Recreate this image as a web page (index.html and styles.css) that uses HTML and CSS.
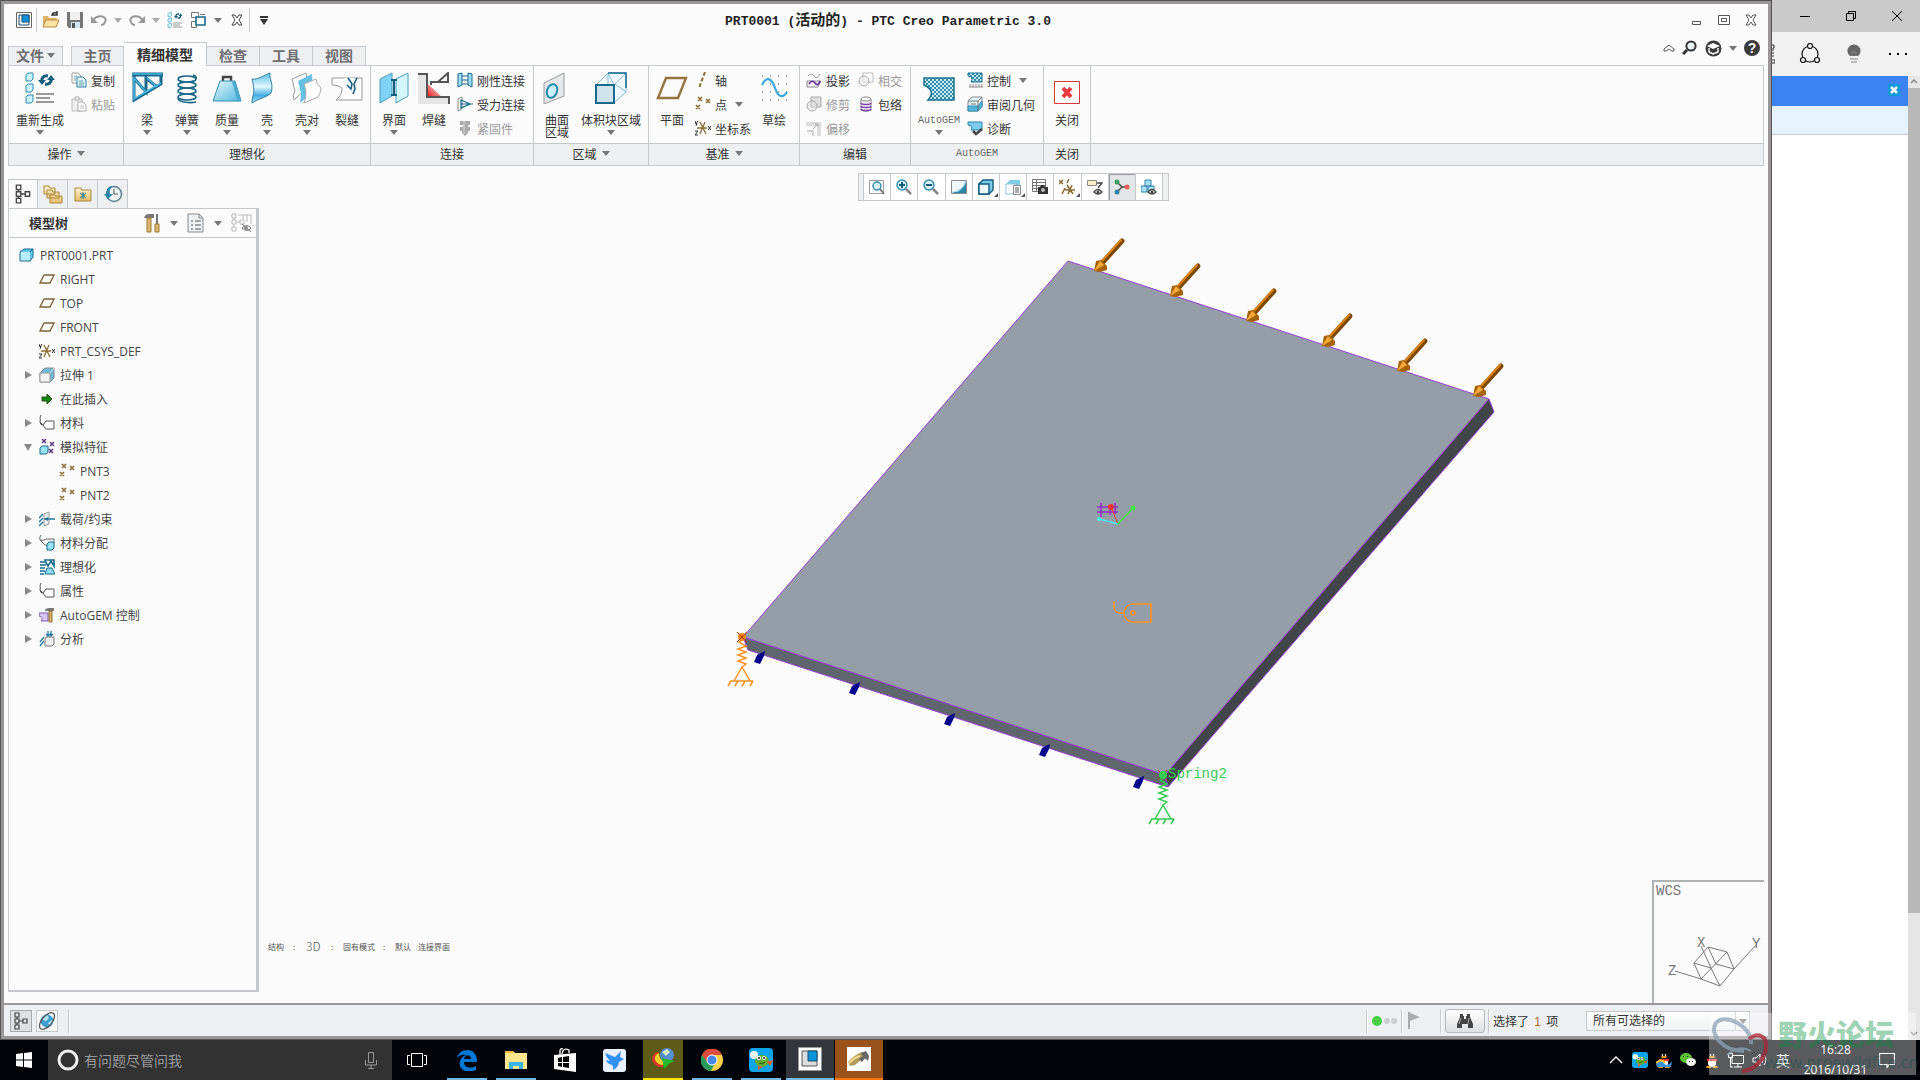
FILE: index.html
```
<!DOCTYPE html>
<html lang="zh-CN">
<head>
    <meta charset="UTF-8">
    <meta name="viewport" content="width=device-width, initial-scale=1.0">
    <title>PRT0001 (活动的) - PTC Creo Parametric 3.0</title>
    <link rel="stylesheet" href="styles.css">
</head>
<body>
    <!-- shared icons -->
    <svg class="defs" width="0" height="0" aria-hidden="true">
        <defs>
            <linearGradient id="blue" x1="0" y1="0" x2="1" y2="1"><stop offset="0" stop-color="#e4f7fd"/><stop offset="1" stop-color="#52b8e0"/></linearGradient>
            <linearGradient id="shell" x1="0" y1="0" x2="0" y2="1"><stop offset="0" stop-color="#56bfea"/><stop offset=".45" stop-color="#e2f7ff"/><stop offset=".75" stop-color="#3faee2"/><stop offset="1" stop-color="#b4e8fb"/></linearGradient>
            <linearGradient id="red" x1="0" y1="1" x2="1" y2="0"><stop offset="0" stop-color="#e81818"/><stop offset="1" stop-color="#fff"/></linearGradient>
            <linearGradient id="gold" x1="0" y1="0" x2="0" y2="1"><stop offset="0" stop-color="#fff3cf"/><stop offset="1" stop-color="#e9bc6a"/></linearGradient>
            <pattern id="mesh" width="4" height="4" patternUnits="userSpaceOnUse"><path d="M0 0L4 4M4 0L0 4" stroke="#17708f" stroke-width=".8"/></pattern>
            <symbol id="i-x3" viewBox="0 0 16 16"><path d="M3 1l4 4M7 1l-4 4M11 3l4 4M15 3l-4 4M1 9l4 4M5 9l-4 4" stroke="#8a6d2f" stroke-width="1.6" fill="none"/></symbol>
            <symbol id="i-plane" viewBox="0 0 16 16"><path d="M5 4h10l-4 8H1z" fill="none" stroke="#7d6435" stroke-width="1.3"/></symbol>
            <symbol id="i-csys" viewBox="0 0 16 16"><path d="M2 8h10M5 2l6 12M10 2L5 14" stroke="#8a6d2f" stroke-width="1.3"/><path d="M0 1l1 3 2-3M2 3L1 6M0 11h3l-3 4h3M13 6l3 4M16 6l-3 4" stroke="#333" fill="none"/></symbol>
            <symbol id="i-cube" viewBox="0 0 16 16"><path d="M1 5l4-3h9v8l-3 4H1z" fill="#62c4ec"/><path d="M1 5h10v9H1z" fill="#b5effd"/><path d="M1 5l4-3h9v8l-3 4H1zM11 5l3-3" fill="none" stroke="#176a8c"/></symbol>
            <symbol id="i-tag" viewBox="0 0 16 16"><path d="M2 0C0 3 2 4 1 7l3 3M1 7q0 3 3 3l3-4h8v8H7l-3-4" fill="none" stroke="#555"/></symbol>
            <symbol id="i-tree" viewBox="0 0 16 18"><path d="M2 1h4v4H2zM2 7h4v4H2zM2 13h4v4H2zM10 7h4v4h-4zM4 5v2M4 11v2M6 9h4" fill="none" stroke="#444" stroke-width="1.2"/></symbol>
            <symbol id="i-regen" viewBox="0 0 32 32"><path d="M2 3l2-2h5v6l-2 2H2zM2 14l2-2h5v6l-2 2H2zM2 25l2-2h5v6l-2 2H2z" fill="#caf2fc" stroke="#2a8db5"/><path d="M12 22h18M12 26h14M12 30h18" stroke="#999" stroke-width="2"/><path d="M18 10c-1-4 2-7 6-6M27 6c1 4-2 7-6 6" fill="none" stroke="#175f80" stroke-width="3"/><path d="M14 8h8l-4 5zM23 8h8l-4-5z" fill="#175f80"/></symbol>
            <symbol id="i-penguin" viewBox="0 0 16 16"><ellipse cx="8" cy="8" rx="5" ry="7" fill="#191919"/><ellipse cx="8" cy="11" rx="4" ry="4" fill="#fff"/><path d="M3 7h10v2H3z" fill="#e33"/><ellipse cx="8" cy="5" rx="3" ry="1" fill="#f8a51b"/><path d="M6 2h1v2H6zM9 2h1v2H9z" fill="#fff"/><path d="M3 14h4v2H2zM9 14h4l1 2H9z" fill="#f8a51b"/></symbol>
            <symbol id="i-pea" viewBox="0 0 24 24"><rect width="24" height="24" rx="4" fill="#0aa5ec"/><ellipse cx="13" cy="13" rx="7" ry="6" fill="#62ad30"/><circle cx="5" cy="7" r="4" fill="#eef7fb"/><circle cx="10" cy="10" r="2" fill="#fff"/><circle cx="15" cy="10" r="2" fill="#fff"/><circle cx="10" cy="10" r="1" fill="#222"/><circle cx="15" cy="10" r="1" fill="#222"/><path d="M10 15q4 2 6-1" stroke="#234d12" fill="none"/><path d="M18 14l6-2-3 6zM9 18l5 1-5 3z" fill="#e5592a"/></symbol>
        </defs>
    </svg>

    <div class="desktop">
        <main class="creo">
            <div class="creo-body">
                <header class="titlebar">
                    <div class="quick">
                        <button class="qbtn" aria-label="窗口"><svg width="16" height="16" viewBox="0 0 16 16"><path d="M.5.5h15v15H.5z" fill="#fff" stroke="#666"/><path d="M3 3h10v10H3z" fill="#eee" stroke="#1c4f70"/><path d="M6 3h7v7H6z" fill="#0a94db" stroke="#1c4f70"/></svg></button>
                        <i class="vsep"></i>
                        <button class="qbtn" aria-label="打开"><svg width="18" height="18" viewBox="0 0 18 18"><path d="M1 16V5h5l1 2h8v9z" fill="#d9b36a"/><path d="M1 16L4 9h13l-3 7z" fill="#fbe3a8" stroke="#b98d3c"/><path d="M10 5c0-4 4-4 5-2M15 0v4h-4" fill="none" stroke="#333" stroke-width="1.5"/></svg></button>
                        <button class="qbtn" aria-label="保存"><svg width="16" height="16" viewBox="0 0 16 16"><path d="M0 0h16v16H2l-2-2z" fill="#777"/><path d="M3 0h10v8H3z" fill="#f0f0f0"/><path d="M4 10h9v6H4z" fill="#cfe6ef"/><path d="M5 11h3v5H5z" fill="#555"/></svg></button>
                        <button class="qbtn" aria-label="撤消"><svg width="16" height="14" viewBox="0 0 16 14"><path d="M2 7c6-7 15-3 12 2q-1 3-4 3" fill="none" stroke="#999" stroke-width="2"/><path d="M0 3v7h7z" fill="#999"/></svg></button>
                        <button class="qcaret" aria-label="撤消列表"><i class="caret light"></i></button>
                        <button class="qbtn" aria-label="重做"><svg width="16" height="14" viewBox="0 0 16 14"><path d="M14 7C8 0-1 4 2 9q1 3 4 3" fill="none" stroke="#999" stroke-width="2"/><path d="M16 3v7H9z" fill="#999"/></svg></button>
                        <button class="qcaret" aria-label="重做列表"><i class="caret light"></i></button>
                        <button class="qbtn" aria-label="重新生成"><svg width="16" height="16"><use href="#i-regen"/></svg></button>
                        <button class="qbtn" aria-label="窗口列表"><svg width="16" height="16" viewBox="0 0 16 16"><path d="M.5.5h7v5h-7zM.5 9.500h5v6h-5zM9 2.500h5" fill="#fff" stroke="#777"/><path d="M5 5h9v8H5z" fill="#fff" stroke="#176a8c" stroke-width="1.600"/></svg></button>
                        <button class="qcaret" aria-label="更多窗口"><i class="caret"></i></button>
                        <button class="qbtn" aria-label="关闭窗口"><svg width="12" height="12" viewBox="0 0 12 12"><path d="M1 1h3l2 3 2-3h3L8 6l3 5H8L6 8l-2 3H1l3-5z" fill="#fff" stroke="#444"/></svg></button>
                        <i class="vsep"></i>
                        <button class="qbtn" aria-label="自定义"><svg width="8" height="9" viewBox="0 0 8 9"><path d="M0 0h8v2H0zM0 3h8L4 9z" fill="#333"/></svg></button>
                    </div>
                    <h1>PRT0001 (<span>活动的</span>) - PTC Creo Parametric 3.0</h1>
                    <div class="winbtns">
                        <button aria-label="最小化"><svg width="12" height="12" viewBox="0 0 12 12"><path d="M1.500 7.500h8v3h-8z" fill="none" stroke="#555"/></svg></button>
                        <button aria-label="最大化"><svg width="12" height="12" viewBox="0 0 12 12"><path d="M.5 1.500h11v9H.5zM3.500 4.500h5v3h-5z" fill="none" stroke="#555"/></svg></button>
                        <button aria-label="关闭"><svg width="12" height="12" viewBox="0 0 12 12"><path d="M1 1h3l2 3 2-3h3L8 6l3 5H8L6 8l-2 3H1l3-5z" fill="#fff" stroke="#555"/></svg></button>
                    </div>
                </header>

                <div class="tabrow">
                    <button class="tab file">文件<i class="caret"></i></button>
                    <nav class="tabs">
                        <button class="tab">主页</button>
                        <button class="tab active">精细模型</button>
                        <button class="tab">检查</button>
                        <button class="tab">工具</button>
                        <button class="tab">视图</button>
                    </nav>
                    <div class="helpbar">
                        <button aria-label="折叠功能区"><svg width="12" height="8" viewBox="0 0 12 8"><path d="M1 5l5-4 5 4v2H9L6 5 3 7H1z" fill="#fff" stroke="#555"/></svg></button>
                        <button aria-label="搜索"><svg width="16" height="16" viewBox="0 0 16 16"><circle cx="9" cy="6" r="4.600" fill="#eef8fb" stroke="#333" stroke-width="2"/><path d="M5 10l-4 4" stroke="#333" stroke-width="3"/></svg></button>
                        <button aria-label="学习"><svg width="17" height="17" viewBox="0 0 17 17"><circle cx="8.500" cy="8.500" r="8" fill="#3b3b3b"/><path d="M2 6l6-3 7 3-7 3z" fill="#fff"/><path d="M4 8v4l4 2 5-2V8" fill="none" stroke="#fff" stroke-width="1.400"/></svg></button>
                        <i class="caret"></i>
                        <button aria-label="帮助" class="q">?</button>
                    </div>
                </div>

                <section class="ribbon">
                    <div class="group">
                        <div class="tools">
                            <button class="big regen"><svg width="32" height="32"><use href="#i-regen"/></svg>重新生成<i class="caret"></i></button>
                            <div class="small-col">
                                <button class="small"><svg width="16" height="16" viewBox="0 0 16 16"><path d="M1 1h6l3 3v7H1z" fill="#fff" stroke="#999"/><path d="M6 5h6l3 3v7H6z" fill="#e3f5fb" stroke="#2b7ba0"/><path d="M8 9h4M8 11h5M8 13h5M3 4h3M3 6h2M3 8h2" stroke="#5aa"/></svg>复制</button>
                                <button class="small" disabled><svg width="16" height="16" viewBox="0 0 16 16"><path d="M1 3h10v12H1z" fill="#eee" stroke="#bbb"/><path d="M4 1h4v3H4zM7 6h5l3 3v6H7z" fill="#fff" stroke="#aaa"/><path d="M9 10h4M9 12h4" stroke="#bbb"/></svg>粘贴</button>
                            </div>
                        </div>
                        <h2>操作<i class="caret"></i></h2>
                    </div>
                    <div class="group">
                        <div class="tools">
                            <button class="big"><svg width="32" height="32" viewBox="0 0 32 32"><path d="M1 2.500h31" stroke="#176a8c" stroke-width="4"/><path d="M3 3v25L30 12V4M3 6l12 14V6l11 9" fill="none" stroke="#176a8c" stroke-width="3"/><path d="M1 2h30M3 5v22L30 11M4 7l11 13M16 6l10 9" fill="none" stroke="#4ab6e2" stroke-width="1.500"/></svg>梁<i class="caret"></i></button>
                            <button class="big"><svg width="32" height="32" viewBox="0 0 32 32"><g fill="none" stroke="#1b6787" stroke-width="1.600"><ellipse cx="16" cy="7" rx="9" ry="3"/><ellipse cx="16" cy="13" rx="9" ry="3"/><ellipse cx="16" cy="19" rx="9" ry="3"/><ellipse cx="16" cy="25" rx="9" ry="3"/><path d="M22 3q4 1 3 4M7 26c0 5 14 5 18 4"/></g></svg>弹簧<i class="caret"></i></button>
                            <button class="big"><svg width="32" height="32" viewBox="0 0 32 32"><path d="M12 9V5h8v4" fill="none" stroke="#444" stroke-width="2.500"/><path d="M9 9h15l6 20H2z" fill="url(#blue)" stroke="#338eac"/><path d="M24 9l6 19-3 2-6-20z" fill="#4ba9cc"/></svg>质量<i class="caret"></i></button>
                            <button class="big"><svg width="32" height="32" viewBox="0 0 32 32"><path d="M1 7C7 8 13 3 19 1c-1 7 4 10 1 20-5 5-12 5-19 10 0-9 4-9 0-24z" fill="url(#shell)" stroke="#3782a0"/></svg>壳<i class="caret"></i></button>
                            <button class="big"><svg width="32" height="32" viewBox="0 0 32 32"><path d="M1 7l14-6 1 8 3 4-16 15q-2-5 1-9z" fill="#fff" stroke="#999"/><path d="M7 9l14-7 1 18-13 11q1-6 1-10z" fill="#63bfe3"/><path d="M13 12l12-5q0 5 5 9-1 7-3 9l-14 6q4-10 0-19z" fill="#fff" stroke="#aaa"/></svg>壳对<i class="caret"></i></button>
                            <button class="big"><svg width="32" height="32" viewBox="0 0 32 32"><path d="M1 6h30v22H5q7-6 6-12-3-3-10-3z" fill="#fff" stroke="#999"/><path d="M13 6h11l-4 3 2 6-1 5-5-7z" fill="#eefaff"/><path d="M17 6l4 6-1 5-4-4M26 6l-3 6 1 5-2 5" fill="none" stroke="#1c5f80" stroke-width="1.600"/></svg>裂缝</button>
                        </div>
                        <h2>理想化</h2>
                    </div>
                    <div class="group">
                        <div class="tools">
                            <button class="big"><svg width="32" height="32" viewBox="0 0 32 32"><path d="M2 7l12-6v23L2 31z" fill="#7fd3f8" stroke="#499bbb"/><path d="M18 7l12-6v23l-12 7z" fill="#d4f7ff" stroke="#499bbb"/><path d="M16 8v15M13 8h6M13 23h6" stroke="#176080" stroke-width="2"/></svg>界面<i class="caret"></i></button>
                            <button class="big"><svg width="32" height="32" viewBox="0 0 32 32"><path d="M0 2h9v23h23v7H0z" fill="#e4e4e4"/><path d="M10 12l14 13H10z" fill="url(#red)"/><path d="M0 2h9v23h22v7M13 13v-3h7L30 1v9H20" fill="none" stroke="#555" stroke-width="2"/></svg>焊缝</button>
                            <div class="small-col">
                                <button class="small"><svg width="16" height="16" viewBox="0 0 16 16"><path d="M1 2l4-1v12l-4 2zM11 1l4 1v13l-4-2z" fill="#9edcf5" stroke="#176a8c"/><path d="M5 4h6M5 8h6M5 12h6" stroke="#176a8c"/></svg>刚性连接</button>
                                <button class="small"><svg width="16" height="16" viewBox="0 0 16 16"><path d="M1 3l4-2v12l-4 2z" fill="#fff" stroke="#888"/><path d="M4 4l9 4-9 4zM4 8h12" fill="none" stroke="#176a8c" stroke-width="1.200"/></svg>受力连接</button>
                                <button class="small" disabled><svg width="16" height="16" viewBox="0 0 16 16"><path d="M3 1h10v4h-2v2h2v4h-2v2l-3 3-3-3v-2H3V7h3V5H3z" fill="#aaa"/><path d="M7 1v13" stroke="#ddd"/></svg>紧固件</button>
                            </div>
                        </div>
                        <h2>连接</h2>
                    </div>
                    <div class="group">
                        <div class="tools">
                            <button class="big"><svg width="32" height="32" viewBox="0 0 32 32"><path d="M3 11l20-10v23L3 32z" fill="#e6e8ea" stroke="#999"/><ellipse cx="11" cy="19" rx="5" ry="7" fill="#c9f2fc" stroke="#2589aa" stroke-width="2" transform="rotate(20 11 19)"/></svg>曲面<br>区域</button>
                            <button class="big wide"><svg width="32" height="32" viewBox="0 0 32 32"><path d="M1 13L13 1h18v19L19 31H1z" fill="#eefaff" stroke="#83b6c7"/><path d="M13 1l6 12M31 20L20 12 31 1M13 1v12" stroke="#8abdcf" fill="none"/><path d="M1 13h18v18H1z" fill="#cfe3ea" stroke="#176a8c" stroke-width="2"/><path d="M13 1h18v15" fill="none" stroke="#176a8c" stroke-width="1.500"/></svg>体积块区域<i class="caret"></i></button>
                        </div>
                        <h2>区域<i class="caret"></i></h2>
                    </div>
                    <div class="group">
                        <div class="tools">
                            <button class="big"><svg width="32" height="32" viewBox="0 0 32 32"><path d="M10 6h20l-8 20H2z" fill="none" stroke="#94743c" stroke-width="2.400"/></svg>平面</button>
                            <div class="small-col datum">
                                <button class="small"><svg width="16" height="16" viewBox="0 0 16 16"><path d="M10 0L4 16" stroke="#8a6d2f" stroke-width="2" stroke-dasharray="4 2"/></svg>轴</button>
                                <button class="small"><svg width="16" height="16"><use href="#i-x3"/></svg>点<i class="caret"></i></button>
                                <button class="small"><svg width="16" height="16"><use href="#i-csys"/></svg>坐标系</button>
                            </div>
                            <button class="big"><svg width="32" height="32" viewBox="0 0 32 32"><path d="M4 4h25M4 12h25M4 20h25M4 28h25" stroke="#444" stroke-dasharray="1 7"/><path d="M4 13c5-10 10-6 13 3s8 11 12 4" fill="none" stroke="#3ba8e0" stroke-width="2.200"/></svg>草绘</button>
                        </div>
                        <h2>基准<i class="caret"></i></h2>
                    </div>
                    <div class="group">
                        <div class="tools edit">
                            <div class="small-col">
                                <button class="small"><svg width="16" height="16" viewBox="0 0 16 16"><path d="M2 4q3-4 6 0t6-2" fill="none" stroke="#999"/><path d="M1 9h14l-3 6H1z" fill="#f3eefa" stroke="#888"/><path d="M3 12q3-5 6-1t5-2" fill="none" stroke="#6b2fa0" stroke-width="1.600"/></svg>投影</button>
                                <button class="small" disabled><svg width="16" height="16" viewBox="0 0 16 16"><path d="M5 1h10v10H5z" fill="#ddd" stroke="#aaa"/><circle cx="6" cy="10" r="5" fill="#ddd8" stroke="#aaa"/></svg>修剪</button>
                                <button class="small" disabled><svg width="16" height="16" viewBox="0 0 16 16"><path d="M0 2h15v14h-4V6H0z" fill="#ddd"/><path d="M1 11h6v5M7 9l5-5M9 4h3v3" fill="none" stroke="#aaa"/></svg>偏移</button>
                            </div>
                            <div class="small-col">
                                <button class="small" disabled><svg width="16" height="16" viewBox="0 0 16 16"><path d="M5 1h10v9H5z" fill="#fff" stroke="#bbb"/><circle cx="6" cy="9" r="5" fill="#eee8" stroke="#aaa"/></svg>相交</button>
                                <button class="small"><svg width="16" height="16" viewBox="0 0 16 16"><path d="M3 3v10c0 3 10 3 10 0V3" fill="#eee" stroke="#888"/><ellipse cx="8" cy="3" rx="5" ry="2" fill="#fff" stroke="#888"/><path d="M3 7c0 2 10 2 10 0M3 10c0 2 10 2 10 0M3 13c0 2 10 2 10 0" fill="none" stroke="#7d3fb0" stroke-width="1.400"/></svg>包络</button>
                            </div>
                        </div>
                        <h2>编辑</h2>
                    </div>
                    <div class="group">
                        <div class="tools">
                            <button class="big gem"><svg width="32" height="32" viewBox="0 0 32 32"><path d="M1 6h30v22H5c5-5 5-11-4-15z" fill="#c3edfa"/><path d="M1 6h30v22H5c5-5 5-11-4-15z" fill="url(#mesh)" stroke="#17708f" stroke-width="1.500"/></svg><span class="mono">AutoGEM</span><i class="caret"></i></button>
                            <div class="small-col">
                                <button class="small"><svg width="16" height="16" viewBox="0 0 16 16"><path d="M1 1h14v9H4q3-5-3-6z" fill="#b6e8f8"/><path d="M1 1h14v9H4q3-5-3-6z" fill="url(#mesh)" stroke="#17708f"/><path d="M3 15v-3M6 15v-3M9 15v-3M12 15v-3M15 15v-3M2 15h14" stroke="#888"/></svg>控制<i class="caret"></i></button>
                                <button class="small"><svg width="16" height="16" viewBox="0 0 16 16"><path d="M1 5l4-4h10v10l-4 4H1z" fill="#e2f4fa" stroke="#888"/><path d="M1 10h10v5H1zM11 10l4-5v6l-4 4z" fill="#52b5dc" stroke="#388daf"/><path d="M1 5h10v9M11 5l4-4M4 8h5" stroke="#777" fill="none"/></svg>审阅几何</button>
                                <button class="small"><svg width="16" height="16" viewBox="0 0 16 16"><path d="M1 2h14v8H4q3-4-3-5z" fill="#7acbef" stroke="#2b86ac"/><path d="M6 11l3 3 6-5" fill="none" stroke="#444" stroke-width="2.500"/></svg>诊断</button>
                            </div>
                        </div>
                        <h2 class="mono">AutoGEM</h2>
                    </div>
                    <div class="group">
                        <div class="tools">
                            <button class="big"><svg width="32" height="32" viewBox="0 0 32 32"><path d="M3.500 9.500h25v22h-25z" fill="#fff" stroke="#d8393b"/><path d="M12 16l8 9M20 16l-8 9" stroke="#e83a3c" stroke-width="4"/></svg>关闭</button>
                        </div>
                        <h2>关闭</h2>
                    </div>
                    <div class="group last"><div class="tools"></div><h2></h2></div>
                </section>

                <div class="work">
                    <aside class="panel">
                        <div class="ptabs">
                            <button class="on" aria-label="模型树"><svg width="18" height="20"><use href="#i-tree"/></svg></button>
                            <button aria-label="文件夹"><svg width="20" height="20" viewBox="0 0 20 20"><path d="M1 2h5l1 2h5v6H1zM4 6h5l1 2h6v6H4zM7 11h5l1 1h6v7H7z" fill="url(#gold)" stroke="#a8873f"/></svg></button>
                            <button aria-label="收藏夹"><svg width="18" height="18" viewBox="0 0 18 18"><path d="M1 3h6l1 2h9v11H1z" fill="url(#gold)" stroke="#a8873f"/><path d="M9 7v7M6 8l6 5M12 8l-6 5" stroke="#176a8c"/></svg></button>
                            <button aria-label="历史"><svg width="20" height="20" viewBox="0 0 20 20"><circle cx="11" cy="10" r="7.500" fill="#eef4f6" stroke="#5c7f8e" stroke-width="1.500"/><path d="M11 5v5h4" fill="none" stroke="#555"/><path d="M10 2C4 2 3 7 4 10H1l4 5 5-5H7c-1-4 1-6 3-8z" fill="#2a86aa"/></svg></button>
                        </div>
                        <div class="pbox">
                            <div class="phead">
                                <h3>模型树</h3>
                                <button aria-label="设置"><svg width="18" height="20" viewBox="0 0 18 20"><path d="M1 5q1-4 5-4h5v4H5z" fill="#777"/><path d="M4 5h4v14H4z" fill="#ddb36a" stroke="#9c7838"/><path d="M14 1v10" stroke="#777" stroke-width="2"/><path d="M12 11h4v8h-4z" fill="#ddb36a" stroke="#9c7838"/></svg></button>
                                <i class="caret"></i>
                                <button aria-label="显示"><svg width="18" height="20" viewBox="0 0 18 20"><path d="M1 1h11l4 4v14H1z" fill="#eef2f5" stroke="#888"/><path d="M12 1v4h4" fill="none" stroke="#888"/><path d="M4 8h2M8 8h6M4 12h2M8 12h6M4 16h2M8 16h6" stroke="#555"/></svg></button>
                                <i class="caret"></i>
                                <button aria-label="树过滤器" disabled><svg width="22" height="20" viewBox="0 0 22 20"><path d="M1 1h4v4H1zM1 7h4v4H1zM1 14h4v4H1zM9 7h4v4H9zM3 5v2M3 11v3M5 9h4M7 2h13v9M12 2v4M16 2v7" fill="none" stroke="#bbb"/><path d="M11 15q5-5 9 0-4 5-9 0zM11 11l9 8" fill="none" stroke="#777"/><circle cx="15" cy="15" r="2" fill="#888"/></svg></button>
                            </div>
                            <ul class="tree">
                                <li class="root"><svg><use href="#i-cube"/></svg>PRT0001.PRT</li>
                                <li><svg><use href="#i-plane"/></svg>RIGHT</li>
                                <li><svg><use href="#i-plane"/></svg>TOP</li>
                                <li><svg><use href="#i-plane"/></svg>FRONT</li>
                                <li><svg><use href="#i-csys"/></svg>PRT_CSYS_DEF</li>
                                <li class="closed"><svg viewBox="0 0 16 16"><path d="M1 6l5-5h9v10l-4 4H1z" fill="#6cb9da" stroke="#888"/><path d="M1 6h10v9H1z" fill="#f2f2f2" stroke="#999"/><path d="M11 6l4-5" stroke="#ddd"/></svg>拉伸 1</li>
                                <li><svg viewBox="0 0 16 16"><path d="M3 6h5V3l5 5-5 5v-3H3z" fill="#0b8a0b" stroke="#2a4a12"/></svg>在此插入</li>
                                <li class="closed"><svg><use href="#i-tag"/></svg>材料</li>
                                <li class="open"><svg viewBox="0 0 16 16"><path d="M1 9l2-2h6v6l-2 2H1z" fill="#9be2f6" stroke="#176a8c"/><path d="M3 0l4 4M7 0L3 4M11 3l4 4M15 3l-4 4M10 10l4 4M14 10l-4 4" stroke="#5e3a8a" stroke-width="1.500"/></svg>模拟特征</li>
                                <li class="sub"><svg><use href="#i-x3"/></svg>PNT3</li>
                                <li class="sub"><svg><use href="#i-x3"/></svg>PNT2</li>
                                <li class="closed"><svg viewBox="0 0 16 16"><path d="M5 3l5-2v12l-5 2z" fill="#eee" stroke="#999"/><path d="M4 3L0 7M4 7l-4 4M4 11l-4 4M5 8h11" stroke="#1f79a0" stroke-width="1.400"/><path d="M6 8l3-2v4z" fill="#176a8c"/></svg>载荷/约束</li>
                                <li class="closed"><svg viewBox="0 0 16 16"><path d="M2 0C0 3 1 4 1 5l4 4M1 5q4 1 6-1h8v4M5 9l3 2" fill="none" stroke="#666"/><path d="M8 9l2-2h5v6l-2 2H8z" fill="#9be2f6" stroke="#176a8c"/></svg>材料分配</li>
                                <li class="closed"><svg viewBox="0 0 16 16"><path d="M1 3h6M1 6h6M1 9h5M1 12h5M1 15h4M5 1h10v6l-3-5-3 5-3-5" fill="none" stroke="#176a8c" stroke-width="1.600"/><path d="M8 9h5l3 6H6z" fill="#8fdcf5" stroke="#176a8c"/></svg>理想化</li>
                                <li class="closed"><svg><use href="#i-tag"/></svg>属性</li>
                                <li class="closed"><svg viewBox="0 0 16 16"><path d="M0 6h9v8H2q3-4-2-5z" fill="#d6c6f3" stroke="#7b5fb0"/><path d="M6 3q1-2 4-2h5v3H6z" fill="#777"/><path d="M10 4h3v11h-3z" fill="#ddb36a" stroke="#8c6d35"/></svg>AutoGEM 控制</li>
                                <li class="closed"><svg viewBox="0 0 16 16"><path d="M6 8l1-2h8v7l-2 2H6z" fill="#eee" stroke="#777"/><path d="M5 6l-4 5M5 10l-4 5M9 0v5M12 0v5M7 3l2 2 2-2 1 2 2-2" fill="none" stroke="#1f79a0" stroke-width="1.300"/></svg>分析</li>
                            </ul>
                        </div>
                    </aside>

                    <section class="view">
                        <div class="viewbar">
                            <i class="grip"></i>
                            <button aria-label="重新调整"><svg viewBox="0 0 16 16"><path d="M.5 1.500h14v13H.5z" fill="#fff" stroke="#999"/><circle cx="8" cy="7" r="4" fill="#d9f2fa" stroke="#2d89ab" stroke-width="1.400"/><path d="M11 10l4 5" stroke="#777" stroke-width="2"/></svg></button>
                            <button aria-label="放大"><svg viewBox="0 0 16 16"><circle cx="6" cy="6" r="5" fill="#d9f2fa" stroke="#2d89ab" stroke-width="1.400"/><path d="M3 6h6M6 3v6" stroke="#125a7c" stroke-width="2"/><path d="M10 10l5 5" stroke="#888" stroke-width="2.500"/></svg></button>
                            <button aria-label="缩小"><svg viewBox="0 0 16 16"><circle cx="6" cy="6" r="5" fill="#d9f2fa" stroke="#2d89ab" stroke-width="1.400"/><path d="M3 6h6" stroke="#125a7c" stroke-width="2"/><path d="M10 10l5 5" stroke="#888" stroke-width="2.500"/></svg></button>
                            <button aria-label="重画"><svg viewBox="0 0 16 16"><path d="M.5 1.500h15v13H.5z" fill="url(#blue)" stroke="#888"/><path d="M1 2h13q-1 9-13 11z" fill="#eef8fb"/><path d="M3 13h4q5-3 8-9v10H3z" fill="#2585aa"/></svg></button>
                            <button class="more" aria-label="显示样式"><svg viewBox="0 0 16 16"><path d="M1 5l4-4h10v10l-4 4H1z" fill="#7ccde9" stroke="#125a7c" stroke-width="1.400"/><path d="M1 5h10v10H1z" fill="#eafaff" stroke="#125a7c" stroke-width="1.400"/></svg></button>
                            <button class="more" aria-label="已保存方向"><svg viewBox="0 0 16 16"><path d="M1 5l4-4h10v10H1z" fill="#7ccde9"/><path d="M1 5h10v10H1z" fill="#fff" stroke="#8fc4d8"/><path d="M8.500 6.500h7v9h-7z" fill="#fff" stroke="#888"/><path d="M10 9h4M10 11h4M10 13h4" stroke="#555"/></svg></button>
                            <button aria-label="视图管理器"><svg viewBox="0 0 16 16"><path d="M.5.5h13v12H.5zM.5 3.500h13M.5 6.500h13M.5 9.500h13M4.500.5v12" fill="#fff" stroke="#777"/><path d="M6 8h2l1-2h3l1 2h3v7H6z" fill="#333"/><circle cx="11" cy="11" r="2" fill="#bbb"/></svg></button>
                            <button class="more" aria-label="基准显示"><svg viewBox="0 0 16 16"><path d="M0 1l4 4M4 1L0 5M10 0L8 4M6 9l-3 6M6 11h10M8 6l6 9M13 6l-4 9" stroke="#8a6d2f" stroke-width="1.500"/></svg></button>
                            <button aria-label="注释显示"><svg viewBox="0 0 16 16"><path d="M.5 1.500h9v5h-9z" fill="#fff2c8" stroke="#888"/><path d="M10 4h5l-4 5M7 13q4-5 8 0-4 4-8 0z" fill="none" stroke="#444" stroke-width="1.300"/><circle cx="11" cy="13" r="1.500" fill="#444"/></svg></button>
                            <button class="pressed" aria-label="旋转中心"><svg viewBox="0 0 16 16"><path d="M3 3l5 5-5 5M8 8h5" fill="none" stroke="#444" stroke-width="1.400"/><circle cx="3" cy="3" r="2.500" fill="#3c9c5c"/><circle cx="3" cy="13" r="2.500" fill="#2d82a8"/><circle cx="13" cy="8" r="2.500" fill="#e8605c"/></svg></button>
                            <button aria-label="模拟显示"><svg viewBox="0 0 16 16"><path d="M4 1h6v6H4zM0 7h6v6H0zM7 7h6v5H7z" fill="#a8e1f3" stroke="#2d82a8"/><path d="M7 13q4-5 8 0-4 4-8 0z" fill="#fff" stroke="#444" stroke-width="1.300"/><circle cx="11" cy="13" r="1.500" fill="#444"/></svg></button>
                            <i class="grip"></i>
                        </div>

                        <!-- model scene -->
                        <svg class="scene" viewBox="259 201 1509 802" preserveAspectRatio="xMaxYMax meet">
                            <defs>
                                <g id="load">
                                    <path d="M8 -8L27 -29" stroke="#7c4703" stroke-width="5" stroke-linecap="round"/>
                                    <path d="M7 -9L26 -30" stroke="#d9820f" stroke-width="2" stroke-linecap="round"/>
                                    <path d="M-1 1L1 -9 6 -10 12 -4 12 0 5 2z" fill="#a86208"/>
                                    <path d="M-1 1L5 -9 9 -5z" fill="#f7ab3c"/>
                                </g>
                                <path id="pin" d="M0 0L-8 4-11 11-5 13-1 5z" fill="#00008c"/>
                                <g id="spring" fill="none" stroke-width="1.500">
                                    <path d="M0 3l-3 2 7 4-8 3 8 3-8 3 8 3-8 3 8 3-4 3M0 30l-8 14H8zM-12 44h23M-11 44l-3 5M-4 44l-3 5M3 44l-3 5M11 44l-3 5"/>
                                </g>
                            </defs>
                            <path d="M1068 261L1489 399 1165 775 743 637z" fill="#959da8" stroke="#943fd0"/>
                            <path d="M743 637L1165 775 1168 787 748 650z" fill="#5f666d" stroke="#943fd0"/>
                            <path d="M1489 399L1494 412 1168 787 1165 775z" fill="#424549" stroke="#943fd0"/>
                            <use href="#load" x="1095" y="270"/>
                            <use href="#load" x="1171" y="295"/>
                            <use href="#load" x="1247" y="320"/>
                            <use href="#load" x="1323" y="345"/>
                            <use href="#load" x="1398" y="370"/>
                            <use href="#load" x="1474" y="395"/>
                            <use href="#pin" x="765" y="651"/>
                            <use href="#pin" x="860" y="682"/>
                            <use href="#pin" x="955" y="713"/>
                            <use href="#pin" x="1050" y="744"/>
                            <use href="#pin" x="1144" y="776"/>
                            <use href="#spring" x="742" y="637" stroke="#ff921e"/>
                            <circle cx="742" cy="637" r="4" fill="#ff8c10"/>
                            <path d="M737 632l10 10M747 632l-10 10" stroke="#a3341c"/>
                            <use href="#spring" x="1163" y="775" stroke="#34cb50"/>
                            <path d="M1158 770l9 10M1167 770l-9 10" stroke="#a3341c"/>
                            <circle cx="1163" cy="775" r="4" fill="#34cb50"/>
                            <text class="spring-label" x="1168" y="778">Spring2</text>
                            <path d="M1097 507h21M1097 512h21M1101 503v14M1110 505v10M1115 503v11" stroke="#902cc0" stroke-width="1.500"/>
                            <path d="M1118 524L1111 507" stroke="#f33"/>
                            <path d="M1118 524L1099 519" stroke="#4ff0f5" stroke-width="1.500"/>
                            <path d="M1118 524L1133 508" stroke="#3ee83e" stroke-width="1.500"/>
                            <circle cx="1111" cy="507" r="3" fill="#f33"/>
                            <circle cx="1099" cy="519" r="2" fill="#4ff0f5"/>
                            <circle cx="1133" cy="508" r="2.500" fill="#3ee83e"/>
                            <path d="M1114 601v5q0 7 6 7h4M1133 604h18v18h-18a9 9 0 0 1 0-18z" fill="none" stroke="#ff921e" stroke-width="1.600"/>
                            <circle cx="1133" cy="613" r="2" fill="none" stroke="#ff921e" stroke-width="1.500"/>
                            <g class="mode">
                                <text x="268" y="950">结构</text><text x="293" y="950">:</text>
                                <text class="dim" x="306" y="951">3D</text><text x="331" y="950">:</text>
                                <text x="343" y="950">固有模式</text><text x="383" y="950">:</text>
                                <text x="395" y="950">默认</text><text x="418" y="950">连接界面</text>
                            </g>
                            <path d="M1653 1003V881h111" fill="none" stroke="#aeb2b2" stroke-width="2"/>
                            <g class="wcs">
                                <text x="1656" y="895">WCS</text>
                                <text x="1697" y="947">X</text><text x="1752" y="948">Y</text><text x="1668" y="975">Z</text>
                            </g>
                            <path d="M1708 947L1727 952 1734 969 1720 986 1701 979 1694 963zM1694 963L1711 968M1716 964L1734 969M1727 952L1701 979M1708 947L1716 964M1711 968L1720 986M1701 946L1711 968M1675 971L1701 979M1757 944L1734 969" fill="none" stroke="#777"/>
                        </svg>
                    </section>
                </div>

                <footer class="status">
                    <button class="sbtn on" aria-label="导航器"><svg width="18" height="18"><use href="#i-tree"/></svg></button>
                    <button class="sbtn" aria-label="浏览器"><svg width="18" height="18" viewBox="0 0 18 18"><circle cx="9" cy="9" r="6.500" fill="#3c9fd0"/><path d="M5 5l4-2 2 3-3 3-3-1zM10 11l4-3 1 3-3 3z" fill="#b6e4f7"/><ellipse cx="9" cy="9" rx="10" ry="5" fill="none" stroke="#555" stroke-width="1.300" transform="rotate(-50 9 9)"/></svg></button>
                    <i class="ssep"></i>
                    <div class="sright">
                        <i class="ssep"></i>
                        <svg width="27" height="12" viewBox="0 0 27 12"><circle cx="6" cy="6" r="5" fill="#44d244"/><circle cx="16" cy="6" r="3" fill="#ccc"/><circle cx="23" cy="6" r="3" fill="#ccc"/></svg>
                        <i class="ssep"></i>
                        <svg class="flag" width="12" height="17" viewBox="0 0 12 17"><path d="M0 0h2v17H0zM2 1l10 4-10 4z" fill="#aaa"/></svg>
                        <i class="ssep"></i>
                        <button class="find" aria-label="查找"><svg width="16" height="16" viewBox="0 0 16 16"><path d="M3 1h3v2h1v3h2V3h1V1h3v3l3 7v4h-5v-4H5v4H0v-4l3-7z" fill="#444"/><path d="M4 5l-2 6M12 5l-1 6" stroke="#aaa"/></svg></button>
                        <i class="ssep"></i>
                        <label for="filter">选择了 <b>1</b> 项</label>
                        <div class="select">
                            <select id="filter"><option>所有可选择的</option></select>
                            <i class="caret"></i>
                        </div>
                    </div>
                </footer>
            </div>
        </main>

        <aside class="edge">
            <div class="edge-title">
                <button aria-label="最小化"><svg width="12" height="12"><path d="M1 6.500h10" stroke="#000"/></svg></button>
                <button aria-label="还原"><svg width="12" height="12"><path d="M1.500 3.500h7v7h-7zM3.500 3V1.500h7v7H9" fill="none" stroke="#000"/></svg></button>
                <button aria-label="关闭"><svg width="12" height="12"><path d="M1 1l10 10M11 1L1 11" stroke="#000"/></svg></button>
            </div>
            <div class="edge-tools">
                <svg class="cut" width="3" height="20"><path d="M0 1h2v3H1v3M0 9h2M0 12h2M0 16h3v3H0" fill="none" stroke="#333"/></svg>
                <button aria-label="共享"><svg width="22" height="22" viewBox="0 0 22 22"><circle cx="11" cy="11" r="8" fill="none" stroke="#111" stroke-width="1.200"/><g fill="#f1f1f1" stroke="#111" stroke-width="1.200"><circle cx="11" cy="3" r="2.500"/><circle cx="4" cy="17" r="2.500"/><circle cx="18" cy="17" r="2.500"/></g></svg></button>
                <button aria-label="提示"><svg width="14" height="20" viewBox="0 0 14 20"><path d="M3 12a6.500 6.500 0 1 1 8 0z" fill="#666"/><path d="M5 12V8h4v4M3 15h8M4 18h6" fill="none" stroke="#888"/></svg></button>
                <button aria-label="更多"><svg width="20" height="4"><path d="M1 1h2v2H1zM9 1h2v2H9zM17 1h2v2h-2z"/></svg></button>
            </div>
            <div class="edge-page">
                <div class="page">
                    <div class="bluebar"><button aria-label="关闭提示"><svg width="12" height="12"><path d="M3 3l6 6M9 3L3 9" stroke="#fff" stroke-width="2.500"/></svg></button></div>
                    <div class="lightbar"></div>
                </div>
                <div class="scroll">
                    <svg width="12" height="12"><path d="M3 7l3-3 3 3" fill="none" stroke="#888" stroke-width="1.500"/></svg>
                    <i class="thumb"></i>
                    <svg width="12" height="12"><path d="M3 4l3 3 3-3" fill="none" stroke="#888" stroke-width="1.500"/></svg>
                </div>
            </div>
        </aside>
    </div>

    <footer class="taskbar">
        <button class="start" aria-label="开始"><svg width="16" height="16" viewBox="0 0 16 16"><path d="M0 2l7-1v6.500H0zM8 1l8-1v7.500H8zM0 8.500h7V15l-7-1zM8 8.500h8V16l-8-1z" fill="#fff"/></svg></button>
        <div class="cortana">
            <svg width="22" height="22"><circle cx="11" cy="11" r="9" fill="none" stroke="#eee" stroke-width="3"/></svg>
            <input type="text" placeholder="有问题尽管问我" aria-label="搜索">
            <svg width="12" height="17" viewBox="0 0 12 17"><path d="M3.500.5h5v10h-5zM.5 8v5h11V8M6 13v3M3 16.500h6" fill="none" stroke="#999"/></svg>
        </div>
        <div class="apps">
            <button class="taskview" aria-label="任务视图"><svg width="20" height="16"><path d="M4.500 1.500h11v13h-11zM3 3.500H.5v9H3M17 3.500h2.500v9H17" fill="none" stroke="#fff"/></svg></button>
            <button class="run" aria-label="Edge"><svg width="22" height="22" viewBox="0 0 22 22"><path d="M1 10C2-1 20-3 21 11v2H8c0 6 7 7 12 4v4C10 25 2 20 4 12c1-3 3-5 6-6-6-1-8 2-9 4zM8 10h7c0-5-6-5-7 0z" fill="#0078d7"/></svg></button>
            <button class="run" aria-label="文件资源管理器"><svg width="22" height="20" viewBox="0 0 22 20"><path d="M0 1h8l2 2h12v16H0z" fill="#ffe58d"/><path d="M0 1h8v2H0z" fill="#f4b63c"/><path d="M4 12h14v7h-4v-3H8v3H4z" fill="#3bb4e8"/></svg></button>
            <button aria-label="应用商店"><svg width="22" height="24" viewBox="0 0 22 24"><path d="M6 7V3q0-3 3-2M8 6q1-7 7-4v3" fill="none" stroke="#fff" stroke-width="1.300"/><path d="M0 7l22-2v19L0 21z" fill="#fff"/><path d="M4 10l4-1v5H4zM9 9l6-1v6H9zM4 15h4v4l-4-1zM9 15h6v5l-6-1z" fill="#000"/></svg></button>
            <button aria-label="迅雷"><svg width="23" height="23" viewBox="0 0 23 23"><rect width="23" height="23" rx="3" fill="#e8f0fc"/><path d="M2 4l10 4 6-6-1 6 4 2-5 3q-1 6-6 8 1-3-1-5-5-1-6-5l4 1q-4-4-5-8z" fill="#3390f3"/></svg></button>
            <button class="idm" aria-label="IDM"><svg width="24" height="24" viewBox="0 0 24 24"><path d="M1 13q0-8 7-8-5 8 9 12-11 8-16-4z" fill="#d43a26"/><path d="M4 13q-1-5 4-7 0 8 9 10-8 5-13-3z" fill="#f0d22c"/><circle cx="16" cy="8" r="7" fill="#558ed0"/><path d="M11 5l5-3 3 3-4 4z" fill="#d8e6c8"/><path d="M11 11l13 3-5 2-6 6z" fill="#28b828"/></svg></button>
            <button class="run" aria-label="Chrome"><svg width="22" height="22" viewBox="0 0 22 22"><circle cx="11" cy="11" r="11" fill="#f9d048"/><path d="M1 6A11 11 0 0 1 21 6H11l-5 8z" fill="#db4b3e"/><path d="M1 6l6 8 6 2-3 6A11 11 0 0 1 1 6z" fill="#279c5a"/><circle cx="11" cy="11" r="5" fill="#4688f0" stroke="#fff"/></svg></button>
            <button class="run" aria-label="游戏"><svg width="24" height="24"><use href="#i-pea"/></svg></button>
            <button class="current" aria-label="Creo"><svg width="24" height="24" viewBox="0 0 24 24"><path d="M.5.5h23v23H.5z" fill="#fff" stroke="#999"/><path d="M4 4h15v15H4z" fill="#ddd" stroke="#555"/><path d="M10 4h9v10h-9z" fill="#0a94db" stroke="#1c4f70"/></svg></button>
            <button class="orange" aria-label="工具"><svg width="24" height="24" viewBox="0 0 24 24"><path d="M0 0h24v24H0z" fill="#fff"/><path d="M1 15q6-7 14-10l6 3-2 4-5 1-6 5-5 1z" fill="#b39a58"/><path d="M14 6l5-2 3 5-1 5-3-3-3 4-3-3 4-3z" fill="#666"/><path d="M2 16q6-6 11-7" fill="none" stroke="#efdb90" stroke-width="2"/></svg></button>
        </div>
        <div class="tray">
            <svg viewBox="0 0 16 16"><path d="M2 11l6-6 6 6" fill="none" stroke="#fff" stroke-width="1.400"/></svg>
            <svg viewBox="0 0 16 16"><use href="#i-pea"/></svg>
            <svg viewBox="0 0 16 16"><use href="#i-penguin"/><path d="M0 12q5-6 8-1t8-2l-1 6H1z" fill="#3a92dd"/><path d="M0 11q6-5 9 0" fill="none" stroke="#f7c32c" stroke-width="2"/></svg>
            <svg viewBox="0 0 16 16"><ellipse cx="6" cy="6" rx="6" ry="5" fill="#58c232"/><ellipse cx="11" cy="10" rx="5" ry="4" fill="#f3f3f3"/><path d="M3 4h1v1H3zM7 4h1v1H7zM9 9h1v1H9zM12 9h1v1h-1z" fill="#222"/></svg>
            <svg viewBox="0 0 16 16"><use href="#i-penguin"/></svg>
            <svg viewBox="0 0 16 16"><path d="M4 3.500h11.500v8H4zM10 12v3M6 15h8M.5 1.500h4v4h-4zM2.500 6v9H5" fill="none" stroke="#fff"/></svg>
            <svg viewBox="0 0 16 16"><path d="M1 6h3l4-4v12l-4-4H1zM10 5q2 3 0 6M12 3q4 5 0 10" fill="none" stroke="#fff"/></svg>
            <span class="ime">英</span>
            <time>16:28<br>2016/10/31</time>
            <svg viewBox="0 0 16 16"><path d="M.5 1.500h15v11H10l-2 3v-3H.5z" fill="none" stroke="#fff" stroke-width="1.200"/></svg>
        </div>
        <div class="watermark">
            <svg width="60" height="60" viewBox="0 0 60 60"><g fill="none" stroke-width="4"><path d="M33 36C10 36-2 18 5 8 14-3 42 12 40 29" stroke="#8da4b8"/><path d="M16 40q12-11 24-4" stroke="#8da4b8" stroke-width="2"/><path d="M38 24c10-8 18-2 17 8-1 12-12 24-24 24" stroke="#a82434"/></g></svg>
            <strong>野火论坛</strong>
            <span>www.proewildfire.cn</span>
        </div>
    </footer>
</body>
</html>
```
FILE: styles.css
```
* {
    box-sizing: border-box;
}

body {
    margin: 0;
    height: 100vh;
    display: flex;
    flex-direction: column;
    overflow: hidden;
    background: #000;
    color: #333;
    font-family: "Liberation Sans", "Noto Sans CJK SC", sans-serif;
    font-size: 12px;
}

button {
    border: 0;
    padding: 0;
    background: none;
    color: inherit;
    font: inherit;
    display: flex;
    align-items: center;
    justify-content: center;
}

h1, h2, h3, ul {
    margin: 0;
    padding: 0;
}

svg {
    flex: none;
}

.defs {
    position: absolute;
}

.caret {
    flex: none;
    border: 4px solid transparent;
    border-top: 5px solid #777;
    border-bottom: 0;
}

.caret.light {
    border-top-color: #aaa;
}

.mono {
    font-family: "Liberation Mono", monospace;
    color: #666;
}

.desktop {
    flex: 1;
    min-height: 0;
    display: flex;
}

/* creo window */
.creo {
    flex: 1;
    min-width: 0;
    display: flex;
    padding: 3px;
    border: 1px solid #555;
    background: #989696;
}

.creo-body {
    flex: 1;
    min-width: 0;
    display: flex;
    flex-direction: column;
    background: #fbfbfc;
}

.titlebar {
    height: 32px;
    display: grid;
    grid-template-columns: 1fr auto 1fr;
    align-items: center;
    padding: 0 4px 0 8px;
}

.titlebar h1 {
    padding-bottom: 3px;
    font: bold 13px "Liberation Mono", "Noto Sans CJK SC", monospace;
    color: #222;
    white-space: pre;
}

.titlebar h1 span {
    font-size: 15px;
}

.quick {
    display: flex;
    align-items: center;
}

.qbtn {
    width: 24px;
    height: 24px;
}

.qcaret {
    width: 14px;
    height: 24px;
}

.vsep {
    width: 1px;
    height: 24px;
    margin-right: 2px;
    background: #c5c9cc;
}

.winbtns {
    display: flex;
    justify-content: flex-end;
}

.winbtns button {
    width: 27px;
    height: 24px;
}

.tabrow {
    height: 29px;
    display: flex;
    align-items: flex-end;
    padding: 0 4px;
}

.tabs {
    display: flex;
    align-items: flex-end;
    flex: 1;
    margin-left: 8px;
}

.tab {
    height: 19px;
    width: 53px;
    padding-bottom: 2px;
    border: 1px solid #c5c9cc;
    border-bottom: 0;
    border-left-width: 0;
    background: #eeeff1;
    color: #6e6e72;
    font-size: 14px;
    font-weight: bold;
}

.tab:first-child {
    border-left-width: 1px;
}

.tab.file {
    width: 55px;
    gap: 3px;
}

.tab.active {
    position: relative;
    width: 83px;
    height: 24px;
    margin-bottom: -1px;
    background: #fbfbfc;
    color: #333;
}

.helpbar {
    display: flex;
    align-items: center;
    gap: 7px;
    height: 34px;
    padding-right: 4px;
}

.helpbar .q {
    width: 16px;
    height: 16px;
    border-radius: 50%;
    background: #3b3b3b;
    color: #fff;
    font-weight: bold;
    font-size: 14px;
}

/* ribbon */
.ribbon {
    display: grid;
    grid-template-columns: 115px 247px 163px 115px 151px 111px 133px 47px 1fr;
    margin: 0 4px;
    border: 1px solid #c5c9cc;
    height: 101px;
}

.group {
    display: flex;
    flex-direction: column;
    border-right: 1px solid #c5c9cc;
}

.group.last {
    border-right: 0;
}

.tools {
    flex: 1;
    display: flex;
    padding: 2px 0 0 3px;
}

.group h2 {
    height: 22px;
    display: flex;
    align-items: center;
    justify-content: center;
    gap: 5px;
    padding-bottom: 2px;
    border-top: 1px solid #c5c9cc;
    background: #eeeff1;
    font-size: 12px;
    font-weight: normal;
}

.group h2.mono {
    font-size: 10px;
}

.big {
    width: 40px;
    flex: none;
    flex-direction: column;
    justify-content: flex-start;
    padding-top: 4px;
    line-height: 12px;
}

.big svg {
    margin-bottom: 11px;
}

.big .caret {
    margin-top: 3px;
}

.big.regen {
    width: 56px;
}

.big.wide {
    width: 68px;
}

.big.gem {
    width: 50px;
}

.big .mono {
    font-size: 10px;
}

.small-col {
    display: flex;
    flex-direction: column;
    padding-left: 3px;
}

.small-col.datum {
    width: 62px;
}

.edit {
    gap: 5px;
}

.small {
    height: 24px;
    justify-content: flex-start;
    gap: 4px;
    white-space: nowrap;
}

.small .caret {
    margin-left: 4px;
}

.small:disabled {
    color: #999;
}

/* work area */
.work {
    flex: 1;
    min-height: 0;
    display: flex;
    padding-left: 4px;
}

.panel {
    width: 251px;
    display: flex;
    flex-direction: column;
    padding: 13px 0 11px;
}

.ptabs {
    display: flex;
    height: 29px;
}

.ptabs button {
    width: 30px;
    border: 1px solid #c5c9cc;
    border-bottom: 0;
    border-left-width: 0;
    background: #eeeff1;
}

.ptabs .on {
    border-left-width: 1px;
    background: #fbfbfc;
}

.pbox {
    flex: 1;
    border: 1px solid #c5c9cc;
    border-right-width: 3px;
    border-bottom-width: 2px;
}

.phead {
    display: flex;
    align-items: center;
    gap: 9px;
    height: 29px;
    padding: 0 3px 0 20px;
    border-bottom: 1px solid #c5c9cc;
}

.phead h3 {
    flex: 1;
    padding-bottom: 2px;
    font-size: 13px;
}

.tree {
    list-style: none;
    padding-top: 5px;
    font-family: "Open Sans", "Noto Sans CJK SC", sans-serif;
    color: #444;
}

.tree li {
    display: flex;
    align-items: center;
    gap: 5px;
    height: 24px;
    padding-left: 30px;
}

.tree svg {
    width: 16px;
    height: 16px;
}

.tree .root {
    padding-left: 10px;
}

.tree .sub {
    padding-left: 50px;
}

.tree .closed::before {
    content: "";
    margin-left: -14px;
    margin-right: 2px;
    border: 4px solid transparent;
    border-left: 7px solid #888;
    border-right: 0;
}

.tree .open::before {
    content: "";
    margin-left: -15px;
    margin-right: 2px;
    border: 4px solid transparent;
    border-top: 7px solid #888;
    border-bottom: 0;
}

.view {
    flex: 1;
    min-width: 0;
    display: flex;
    flex-direction: column;
    align-items: center;
    padding-top: 7px;
}

.viewbar {
    display: flex;
    height: 28px;
    width: 311px;
    border: 1px solid #c5c9cc;
    background: #fff;
}

.viewbar button {
    position: relative;
    flex: 1;
    border-right: 1px solid #c5c9cc;
}

.viewbar svg {
    width: 16px;
    height: 16px;
}

.viewbar .grip {
    width: 5px;
    background: #eeeff1;
}

.viewbar .grip:first-child {
    border-right: 1px solid #c5c9cc;
}

.viewbar .more::after {
    content: "";
    position: absolute;
    right: 1px;
    bottom: 3px;
    border: 2px solid #555;
    border-top-color: transparent;
    border-left-color: transparent;
}

.viewbar .pressed {
    background: #e4e5e7;
    box-shadow: inset 1px 1px 1px #999;
}

.scene {
    flex: 1;
    min-height: 0;
    width: 100%;
}

.spring-label {
    font: 14px "Liberation Mono", monospace;
    fill: #34cb50;
}

.mode {
    font: 8px "Noto Sans CJK SC", sans-serif;
    fill: #555;
}

.mode .dim {
    font-size: 12px;
    font-weight: 300;
}

.wcs {
    font: 14px "Liberation Mono", monospace;
    fill: #777;
}

/* status bar */
.status {
    height: 33px;
    display: flex;
    align-items: center;
    gap: 4px;
    padding: 0 18px 0 6px;
    border-top: 2px solid #989696;
    background: #eeeff1;
}

.sbtn {
    width: 22px;
    height: 22px;
    border: 1px solid #c5c9cc;
    background: #f8f8f9;
}

.sbtn.on {
    border-color: #a5a8aa;
    background: #dfe0e3;
}

.ssep {
    width: 2px;
    height: 24px;
    border-left: 1px solid #c5c9cc;
    background: #fff;
}

.sbtn + .ssep {
    margin-left: 6px;
}

.sright {
    margin-left: auto;
    display: flex;
    align-items: center;
    gap: 3px;
}

.flag {
    margin: 0 17px 0 2px;
}

.find {
    width: 40px;
    height: 24px;
    border: 1px solid #b5b8ba;
    border-radius: 3px;
    background: linear-gradient(#fff, #dedfe1);
}

.sright label {
    width: 90px;
    white-space: pre;
}

.sright b {
    margin: 0 2px;
    font-weight: normal;
    color: #a86b28;
}

.select {
    position: relative;
    width: 164px;
}

.select select {
    appearance: none;
    width: 100%;
    height: 20px;
    padding: 0 6px;
    border: 1px solid #c5c9cc;
    border-radius: 0;
    background: linear-gradient(#fff, #f0f1f2);
    color: #333;
    font: inherit;
}

.select::after {
    content: "";
    position: absolute;
    right: 14px;
    top: 1px;
    bottom: 1px;
    border-left: 1px solid #c5c9cc;
}

.select .caret {
    position: absolute;
    right: 3px;
    top: 8px;
}

/* browser window behind */
.edge {
    width: 148px;
    display: flex;
    flex-direction: column;
    background: #fff;
}

.edge-title {
    height: 32px;
    display: flex;
    padding-left: 10px;
    background: #cacaca;
}

.edge-title button {
    width: 46px;
}

.edge-tools {
    height: 44px;
    display: flex;
    align-items: center;
    background: #f1f1f1;
}

.edge-tools button {
    width: 44px;
}

.edge-tools .cut {
    margin-right: 13px;
}

.edge-page {
    flex: 1;
    display: flex;
}

.page {
    flex: 1;
}

.bluebar {
    height: 30px;
    display: flex;
    align-items: center;
    justify-content: flex-end;
    padding: 0 8px 2px 0;
    background: #3b82f2;
}

.bluebar button {
    width: 12px;
    height: 12px;
    background: #0a9ad4;
}

.lightbar {
    height: 29px;
    border-bottom: 1px solid #c5cbd0;
    background: #e6f2fd;
}

.scroll {
    width: 12px;
    display: flex;
    flex-direction: column;
    justify-content: space-between;
    background: #e6e6e6;
}

.thumb {
    flex: 1;
    margin-bottom: 115px;
    background: #b8b8b8;
}

/* taskbar */
.taskbar {
    position: relative;
    height: 40px;
    display: flex;
    background: #010409;
    color: #fff;
}

.start {
    width: 48px;
}

.cortana {
    width: 344px;
    display: flex;
    align-items: center;
    gap: 5px;
    padding: 0 15px 0 9px;
    background: #323232;
}

.cortana input {
    flex: 1;
    min-width: 0;
    padding: 0;
    border: 0;
    outline: 0;
    background: none;
    color: #fff;
    font: 14px "Noto Sans CJK SC", sans-serif;
}

.cortana input::placeholder {
    color: #999;
}

.apps {
    display: flex;
    gap: 1px;
}

.apps button {
    width: 48px;
}

.apps .taskview {
    width: 50px;
}

.apps .run {
    background: linear-gradient(#76b9ed, #76b9ed) center bottom / 40px 2px no-repeat;
}

.apps .idm {
    width: 40px;
    margin: 0 4px;
    border-bottom: 2px solid #ffe800;
    background: #5e5a17;
}

.apps .current {
    border-bottom: 2px solid #76b9ed;
    background: #33373c;
}

.apps .orange {
    border-bottom: 2px solid #ff7700;
    background: #9a521b;
}

.tray {
    margin-left: auto;
    display: flex;
    align-items: center;
    gap: 8px;
    padding-right: 25px;
}

.tray svg {
    width: 16px;
    height: 16px;
}

.ime {
    width: 16px;
    font-size: 14px;
}

.tray time {
    width: 71px;
    font: 12px/20px "Open Sans", sans-serif;
    text-align: center;
}

.watermark {
    position: absolute;
    right: 4px;
    bottom: 5px;
    width: 207px;
    height: 62px;
    background: rgba(255, 255, 255, 0.35);
}

.watermark svg {
    position: absolute;
    left: 2px;
    top: 2px;
    opacity: 0.75;
}

.watermark strong {
    position: absolute;
    left: 69px;
    top: 3px;
    color: rgba(0, 140, 60, 0.4);
    font: 900 29px/34px "Noto Sans CJK SC", sans-serif;
}

.watermark span {
    position: absolute;
    left: 56px;
    top: 38px;
    color: rgba(20, 80, 80, 0.45);
    font: 16px/22px "Open Sans", sans-serif;
}
```
